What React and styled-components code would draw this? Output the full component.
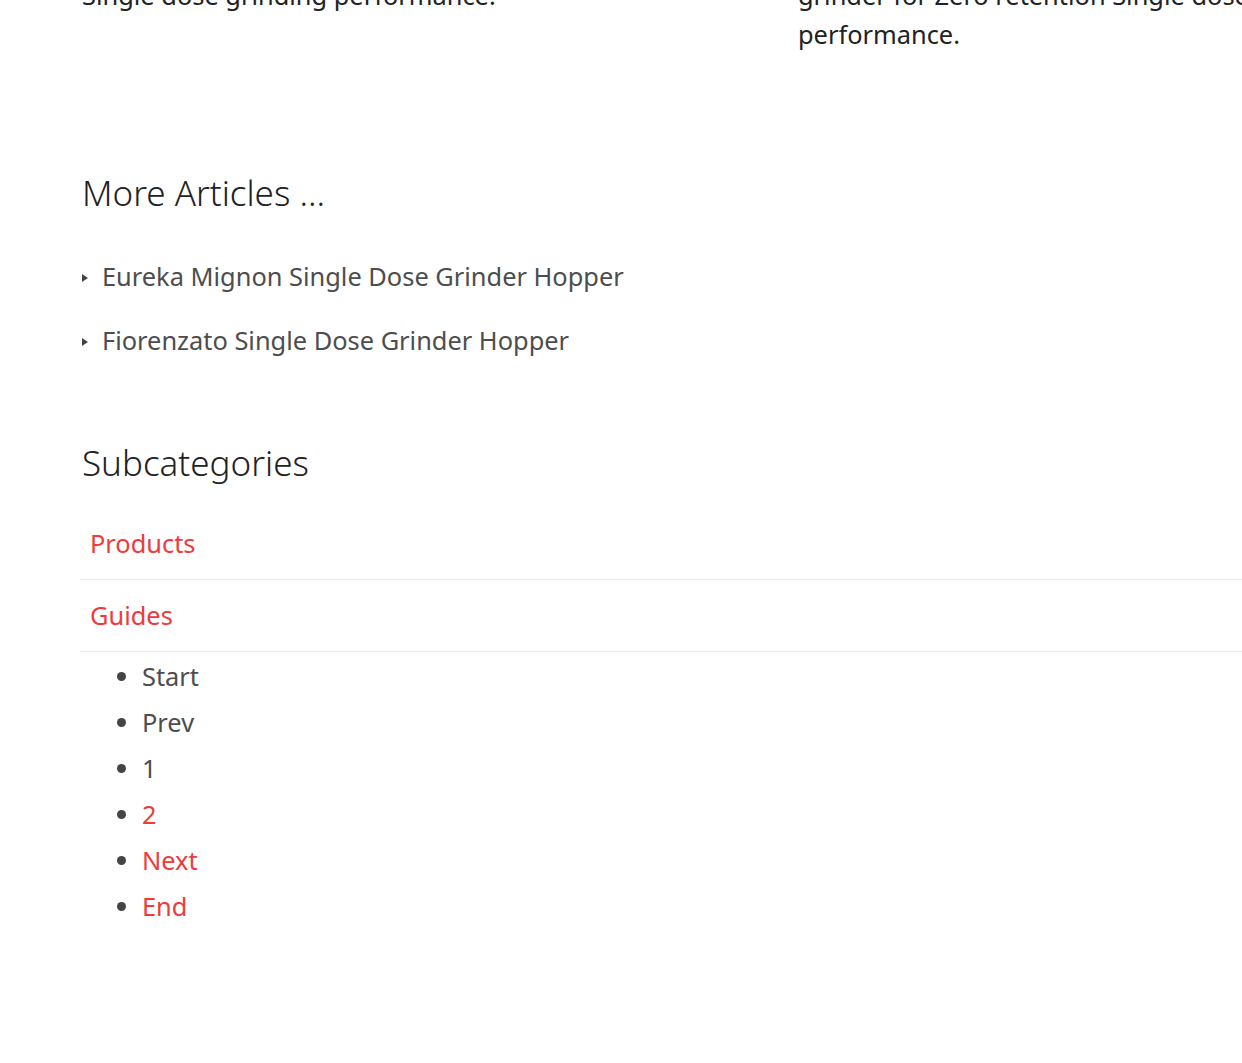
import React from "react";
import styled, { createGlobalStyle } from "styled-components";

const GlobalStyle = createGlobalStyle`
  html, body {
    margin: 0;
    padding: 0;
    background: #ffffff;
    overflow-x: hidden;
  }
  body {
    font-family: "Noto Sans", "Open Sans", sans-serif;
    color: #444;
  }
`;

const Page = styled.div`
  padding-left: 82px;
  padding-bottom: 120px;
`;

const IntroGrid = styled.div`
  display: grid;
  grid-template-columns: 690px 690px;
  column-gap: 26px;
  margin-top: -24px;
`;

const IntroText = styled.p`
  margin: 0;
  font-size: 25.4px;
  line-height: 39px;
  color: #222;
  white-space: nowrap;
`;

const SectionTitle = styled.h3`
  margin: ${(p) => p.$top}px 0 0;
  font-size: 35px;
  line-height: 40.8px;
  font-weight: 300;
  color: #222;
`;

const ArticleList = styled.ul`
  list-style: none;
  margin: 30px 0 0;
  padding: 0;
`;

const ArticleItem = styled.li`
  display: flex;
  align-items: center;
  font-size: 25.4px;
  line-height: 64px;
  color: #4d4d4d;
`;

const Caret = styled.span`
  width: 0;
  height: 0;
  border-top: 4.5px solid transparent;
  border-bottom: 4.5px solid transparent;
  border-left: 6px solid #444;
  margin: 4px 14px 0 0;
`;

const CategoryList = styled.div`
  margin: 24px 0 0 -2px;
`;

const CategoryRow = styled.div`
  padding: 14px 10px;
  border-bottom: 1px solid #ececec;
  font-size: 25.4px;
  line-height: 43px;
`;

const RedLink = styled.a`
  color: #ee3b3b;
  text-decoration: none;
`;

const Pager = styled.ul`
  margin: 1px 0 0;
  padding-left: 60px;
  list-style: disc;
`;

const PagerItem = styled.li`
  font-size: 25.4px;
  line-height: 46px;
  color: ${(p) => (p.$active ? "#ee3b3b" : "#4d4d4d")};
  &::marker {
    color: #444;
  }
`;

const pages = [
  { label: "Start" },
  { label: "Prev" },
  { label: "1" },
  { label: "2", link: true },
  { label: "Next", link: true },
  { label: "End", link: true },
];

export default function App() {
  return (
    <Page>
      <GlobalStyle />
      <IntroGrid>
        <IntroText>Single dose grinding performance.</IntroText>
        <IntroText>
          grinder for Zero retention Single dose
          <br />
          performance.
        </IntroText>
      </IntroGrid>

      <SectionTitle $top={119}>More Articles ...</SectionTitle>
      <ArticleList>
        <ArticleItem>
          <Caret />
          Eureka Mignon Single Dose Grinder Hopper
        </ArticleItem>
        <ArticleItem>
          <Caret />
          Fiorenzato Single Dose Grinder Hopper
        </ArticleItem>
      </ArticleList>

      <SectionTitle $top={71}>Subcategories</SectionTitle>
      <CategoryList>
        <CategoryRow>
          <RedLink href="#">Products</RedLink>
        </CategoryRow>
        <CategoryRow>
          <RedLink href="#">Guides</RedLink>
        </CategoryRow>
      </CategoryList>

      <Pager>
        {pages.map((p) => (
          <PagerItem key={p.label} $active={p.link}>
            {p.label}
          </PagerItem>
        ))}
      </Pager>
    </Page>
  );
}
